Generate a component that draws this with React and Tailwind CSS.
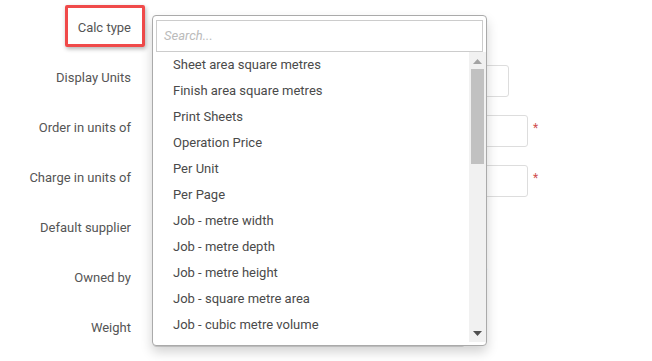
import React from 'react';

const rows = [
    { label: 'Calc type', width: 'w-[324px]', star: 'mt-[3px]' },
    { label: 'Display Units', width: 'w-[356px]' },
    { label: 'Order in units of', width: 'w-[375px]', star: 'mt-[7px]' },
    { label: 'Charge in units of', width: 'w-[375px]', star: 'mt-[7px]' },
    { label: 'Default supplier', width: 'w-[312px]' },
    { label: 'Owned by', width: 'w-[324px]', star: 'mt-[1px]' },
    { label: 'Weight', width: 'w-[312px]' },
];

const options = [
    'Sheet area square metres',
    'Finish area square metres',
    'Print Sheets',
    'Operation Price',
    'Per Unit',
    'Per Page',
    'Job - metre width',
    'Job - metre depth',
    'Job - metre height',
    'Job - square metre area',
    'Job - cubic metre volume',
];

const App = () => {
    return (
        <div className="relative w-[652px] h-[361px] bg-white overflow-hidden font-['Roboto',sans-serif] text-[13px]">
            {/* form behind the dropdown */}
            <div className="flex flex-col pt-[15px]">
                {rows.map(row => (
                    <div key={row.label} className="flex items-start h-[50px]">
                        <label className="w-[131px] text-right text-[#555] leading-[18px] pt-[4px]">{row.label}</label>
                        <div className="flex items-start ml-[22px]">
                            <div className={`${row.width} h-[32px] border border-[#ddd] rounded-[3px] bg-white`}></div>
                            {row.star && <span className={`${row.star} ml-[5px] text-[#d05050] text-[12px] leading-[12px]`}>*</span>}
                        </div>
                    </div>
                ))}
            </div>

            {/* highlight box */}
            <div className="absolute left-[65px] top-[5px] w-[80px] h-[42px] border-[3px] border-[#f04a4a] rounded-[2px] shadow-[1px_2px_4px_rgba(0,0,0,0.3)]"></div>

            {/* dropdown */}
            <div className="absolute left-[152px] top-[15px] w-[335px] h-[331px] bg-white border border-[#aaa] rounded-[4px] shadow-[0_6px_12px_rgba(0,0,0,0.18)] flex flex-col">
                <div className="px-[3px] pt-[4px]">
                    <div className="h-[32px] border border-[#ccc] flex items-center px-[7px]">
                        <span className="italic text-[#bbb]">Search...</span>
                    </div>
                </div>
                <div className="flex flex-1 overflow-hidden mb-[3px]">
                    <div className="flex-1 overflow-hidden">
                        {options.map(opt => (
                            <div key={opt} className="h-[26px] flex items-center pl-[20px] text-[#4a4a4a]">{opt}</div>
                        ))}
                    </div>
                    <div className="w-[17px] bg-[#f1f1f1] flex flex-col items-center">
                        <svg width="9" height="5" viewBox="0 0 9 5" className="mt-[7px]">
                            <path d="M0 5 L4.5 0 L9 5 Z" fill="#a3a3a3" />
                        </svg>
                        <div className="w-[13px] h-[95px] bg-[#c1c1c1] mt-[5px]"></div>
                        <svg width="9" height="5" viewBox="0 0 9 5" className="mt-auto mb-[6px]">
                            <path d="M0 0 L4.5 5 L9 0 Z" fill="#505050" />
                        </svg>
                    </div>
                </div>
            </div>
        </div>
    );
};

export default App;
